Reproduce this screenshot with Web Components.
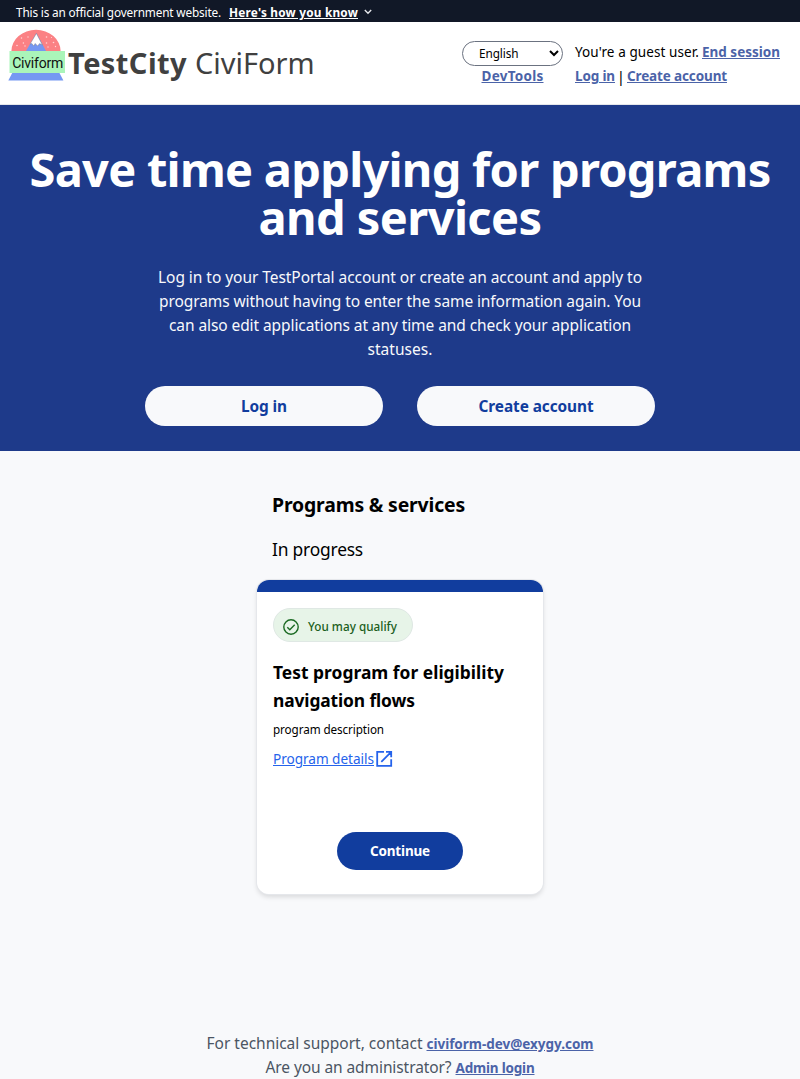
<!DOCTYPE html>
<html lang="en"><head><meta charset="utf-8"><title>CiviForm</title>
<style>
html,body{margin:0;padding:0}
body{background:#f8f9fb;font-family:"Noto Sans","Open Sans",sans-serif;color:#000}
</style></head><body>
<civi-page></civi-page>
<script>
function define(name, css, html, init){
  const t=document.createElement('template');
  t.innerHTML='<style>*{box-sizing:border-box}'+css+'</style>'+html;
  customElements.define(name, class extends HTMLElement{
    constructor(){super();this.attachShadow({mode:'open'}).appendChild(t.content.cloneNode(true));}
    connectedCallback(){if(init)init(this);}
  });
}
/* One line of text, tracked so that it spans the given width. */
define('fit-text',':host{display:inline-block;white-space:nowrap}span{display:inline-block;vertical-align:top;text-decoration:inherit;letter-spacing:var(--ls,0)}','<span><slot></slot></span>',el=>{
  const w=+el.getAttribute('w');
  const n=[...el.textContent].length;
  const span=el.shadowRoot.querySelector('span');
  const natural=span.getBoundingClientRect().width;
  if(natural) el.style.setProperty('--ls',((w-natural)/n).toFixed(4)+'px');
  el.style.width=w+'px';
});
define('text-link',':host{display:inline-block;color:#4b63a8;font-weight:700;font-size:13.5px}a{color:inherit;display:block;text-underline-offset:1px}::slotted(fit-text){text-decoration:underline;vertical-align:top}','<a><slot></slot></a>');
define('gov-banner',':host{display:flex;height:22px;background:#111827;color:#fff;align-items:center;padding:2px 0 0 16px;font-size:11.8px;line-height:20px}.k{margin-left:8px;font-weight:700;text-decoration:underline;text-underline-offset:1px}svg{margin:0 0 0 6px}',
 '<fit-text w="205">This is an official government website.</fit-text><fit-text class="k" w="129">Here\'s how you know</fit-text><svg width="8" height="6" viewBox="0 0 8 6"><path d="M.8 1l3.2 3.2L7.2 1" fill="none" stroke="#e5e7eb" stroke-width="1.4"/></svg>');
define('civi-logo',':host{display:block;width:58px;height:52px}svg{display:block}',
`<svg width="58" height="52" viewBox="0 0 58 52">
<path d="M3.4 22A24.6 21.2 0 0 1 52.6 22z" fill="#fb8184"/>
<path d="M18 22L28.4 4 38 22z" fill="#7598f2"/><path d="M28.4 4.5l6 11.5-2.8-1.5-2 2.5-2.4-2.6-1.5 2.6-1.8-2.5-1.8.6z" fill="#fff" stroke="#666" stroke-width=".35"/>
<g fill="#ffd6d7"><circle cx="13.5" cy="9" r=".75"/><circle cx="20" cy="8" r=".7"/><circle cx="15.4" cy="14" r=".75"/><circle cx="9" cy="16.5" r=".8"/><circle cx="17" cy="17" r=".7"/><circle cx="38.5" cy="8" r=".8"/><circle cx="43.5" cy="8.5" r=".6"/><circle cx="38.5" cy="14" r=".8"/><circle cx="45.5" cy="13.5" r=".8"/><circle cx="40" cy="18" r=".7"/><circle cx="47.5" cy="17.5" r=".7"/></g>
<path d="M4.5 43.5h46.7l4.2 8H.3z" fill="#7598f2"/><path d="M1.5 22H57v22H1.5z" fill="#aaf5b9"/>
<text x="4.2" y="39" textLength="51" font-family="Roboto,sans-serif" font-size="14" fill="#111">Civiform</text></svg>`);
define('language-select',':host{display:flex;width:101px;height:25px;border:1px solid #6b7280;border-radius:13px;background:#fff;align-items:center;justify-content:space-between;padding:0 3px 0 16px;font-size:11.8px;line-height:23px}',
 '<fit-text w="39.5">English</fit-text><svg width="10" height="7" viewBox="0 0 10 7"><path d="M1 1l4 4 4-4" fill="none" stroke="#000" stroke-width="2"/></svg>');
define('site-header',`:host{display:flex;height:83px;background:#fff;border-bottom:1px solid #e5e7eb;padding:0 20px 0 8px;align-items:flex-start}
civi-logo{margin-top:7px}.brand{display:flex;gap:8px;color:#404040;font-size:29px;line-height:40px;margin:21px 0 0 2px}
.lang{margin:19px 0 0 auto;width:101px;display:flex;flex-direction:column;align-items:center}.lang text-link{line-height:20px}
.user{margin:18px 0 0 12px;width:205px;font-size:13.5px;line-height:24px}.row{display:flex;justify-content:space-between;height:24px}.b{justify-content:flex-start}.bar{width:12px;text-align:center;font-size:15px}`,
 `<civi-logo></civi-logo><div class="brand"><b><fit-text w="119">TestCity</fit-text></b><fit-text w="119.5">CiviForm</fit-text></div>
<div class="lang"><language-select></language-select><text-link><fit-text w="62">DevTools</fit-text></text-link></div>
<div class="user"><div class="row"><fit-text w="124">You're a guest user.</fit-text><text-link><fit-text w="78">End session</fit-text></text-link></div>
<div class="row b"><text-link><fit-text w="40">Log in</fit-text></text-link><span class="bar">|</span><text-link><fit-text w="100">Create account</fit-text></text-link></div></div>`);
define('pill-button',':host{display:flex;align-items:center;justify-content:center;font-weight:700;border-radius:20px;height:40px;width:238px;background:#f8f9fb;color:#113d9e;font-size:15.4px;line-height:24px}','<slot></slot>');
define('hero-section',`:host{display:flex;flex-direction:column;align-items:center;height:346px;background:#1e3a8a;color:#f8f9fb;padding-top:40px}
h1{margin:0;font-size:47px;line-height:48px;text-align:center;color:#fff;display:flex;flex-direction:column;align-items:center}
p{margin:24px 0 25px;display:flex;flex-direction:column;align-items:center;font-size:15.5px;line-height:24px}.r{display:flex;gap:34px}.r pill-button{padding-top:1px}`,
 `<h1><fit-text w="741">Save time applying for programs</fit-text><fit-text w="283">and services</fit-text></h1>
<p><fit-text w="484">Log in to your TestPortal account or create an account and apply to</fit-text><fit-text w="482">programs without having to enter the same information again. You</fit-text><fit-text w="462">can also edit applications at any time and check your application</fit-text><fit-text w="65">statuses.</fit-text></p>
<div class="r"><pill-button><fit-text w="46">Log in</fit-text></pill-button><pill-button><fit-text w="115">Create account</fit-text></pill-button></div>`);
define('qualify-chip',':host{display:flex;width:140px;height:34px;border:1px solid #dfe8e4;border-radius:17px;background:#e7f4e8;color:#1b5e20;align-items:center;padding-left:9px;font-size:11.7px;font-weight:500;line-height:20px}svg{margin:3px 9px 0 0}fit-text{margin-top:1px}',
 '<svg width="16" height="16" viewBox="0 0 16 16" fill="none" stroke="#1b6a22"><circle cx="8" cy="8" r="7.2" stroke-width="1.4"/><path d="M4.3 8.2l2.5 2.5 4.9-4.9" stroke-width="1.4"/></svg><fit-text w="89">You may qualify</fit-text>');
define('program-card',`:host{display:flex;flex-direction:column;width:286px;height:314px;background:linear-gradient(#113d9e 12px,#fff 12px);box-shadow:0 0 0 1px #e5e7eb,0 3px 5px rgba(0,0,0,.13);border-radius:12px;padding:28px 16px 0}
h3{margin:16px 0 0;font-size:17.4px;line-height:28px;display:flex;flex-direction:column;align-items:flex-start}
.d{font-size:11.7px;line-height:16px;height:16px;margin-top:7px}.a{display:flex;align-items:center;color:#2563eb;font-size:13.6px;line-height:20px;margin-top:12px;gap:2px}.a fit-text{text-decoration:underline;text-underline-offset:1px}
pill-button{background:#113d9e;color:#fff;width:126px;height:38px;font-size:13.5px;align-self:center;margin-top:63px}`,
 `<qualify-chip></qualify-chip><h3><fit-text w="231">Test program for eligibility</fit-text><fit-text w="142">navigation flows</fit-text></h3><div class="d"><fit-text w="111">program description</fit-text></div>
<div class="a"><fit-text w="101">Program details</fit-text><svg width="18" height="20" viewBox="0 0 18 20" fill="none" stroke="#2563eb" stroke-width="1.8"><path d="M8 2.9H1.2v14h14V10.2M10 2.9h5.2v5.4M15 3.1L5.3 12.8"/></svg></div>
<pill-button><fit-text w="60">Continue</fit-text></pill-button>`);
define('page-footer',':host{display:flex;flex-direction:column;align-items:center;color:#4b5563;font-size:15.5px;line-height:24px}div{display:flex;gap:4px;height:24px}text-link{padding-top:1px}',
 '<div><fit-text w="216">For technical support, contact</fit-text><text-link><fit-text w="167">civiform-dev@exygy.com</fit-text></text-link></div><div><fit-text w="186">Are you an administrator?</fit-text><text-link><fit-text w="79">Admin login</fit-text></text-link></div>');
define('civi-page',`:host{display:block;height:1079px;overflow:hidden}main{box-sizing:border-box;width:286px;margin:0 auto;height:580px;padding-top:40px}h2{margin:0 0 0 15px;font-size:19.4px;line-height:28px}.s{margin:16px 0 17px 15px;font-size:17.4px;line-height:28px}`,
 `<gov-banner></gov-banner><site-header></site-header><hero-section></hero-section><main><h2><fit-text w="193">Programs &amp; services</fit-text></h2><div class="s"><fit-text w="91">In progress</fit-text></div><program-card></program-card></main><page-footer></page-footer>`);
</script></body></html>
